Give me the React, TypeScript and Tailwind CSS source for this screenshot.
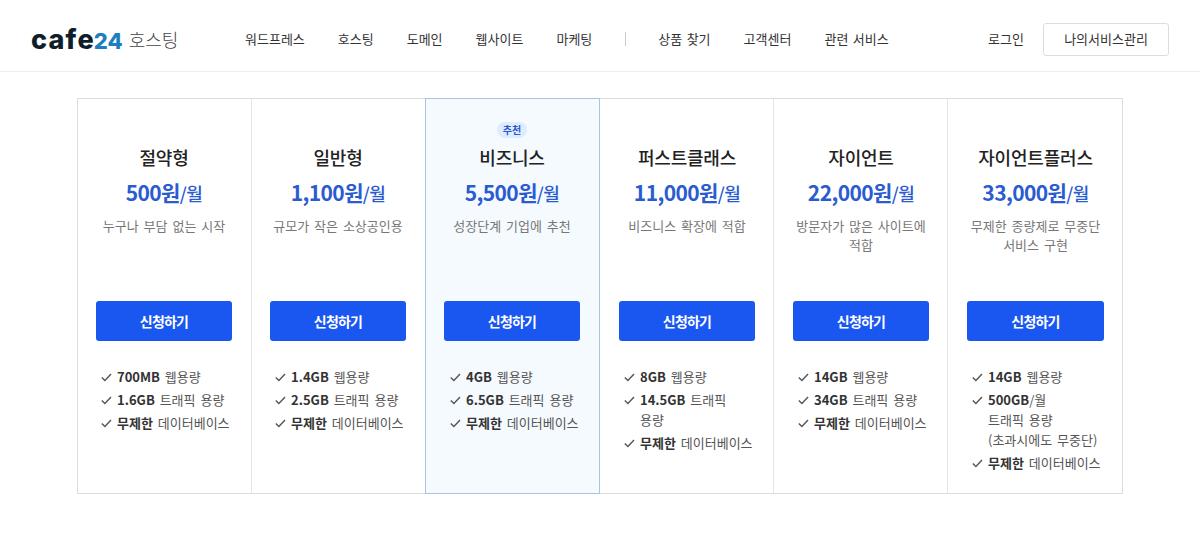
import React from "react";

type Plan = {
  name: string;
  price: string;
  desc: string[];
  features: { bold: string; rest: string[] }[];
  recommended?: boolean;
};

const plans: Plan[] = [
  {
    name: "절약형",
    price: "500원",
    desc: ["누구나 부담 없는 시작"],
    features: [
      { bold: "700MB", rest: [" 웹용량"] },
      { bold: "1.6GB", rest: [" 트래픽 용량"] },
      { bold: "무제한", rest: [" 데이터베이스"] },
    ],
  },
  {
    name: "일반형",
    price: "1,100원",
    desc: ["규모가 작은 소상공인용"],
    features: [
      { bold: "1.4GB", rest: [" 웹용량"] },
      { bold: "2.5GB", rest: [" 트래픽 용량"] },
      { bold: "무제한", rest: [" 데이터베이스"] },
    ],
  },
  {
    name: "비즈니스",
    price: "5,500원",
    desc: ["성장단계 기업에 추천"],
    recommended: true,
    features: [
      { bold: "4GB", rest: [" 웹용량"] },
      { bold: "6.5GB", rest: [" 트래픽 용량"] },
      { bold: "무제한", rest: [" 데이터베이스"] },
    ],
  },
  {
    name: "퍼스트클래스",
    price: "11,000원",
    desc: ["비즈니스 확장에 적합"],
    features: [
      { bold: "8GB", rest: [" 웹용량"] },
      { bold: "14.5GB", rest: [" 트래픽", "용량"] },
      { bold: "무제한", rest: [" 데이터베이스"] },
    ],
  },
  {
    name: "자이언트",
    price: "22,000원",
    desc: ["방문자가 많은 사이트에", "적합"],
    features: [
      { bold: "14GB", rest: [" 웹용량"] },
      { bold: "34GB", rest: [" 트래픽 용량"] },
      { bold: "무제한", rest: [" 데이터베이스"] },
    ],
  },
  {
    name: "자이언트플러스",
    price: "33,000원",
    desc: ["무제한 종량제로 무중단", "서비스 구현"],
    features: [
      { bold: "14GB", rest: [" 웹용량"] },
      { bold: "500GB", rest: ["/월", "트래픽 용량", "(초과시에도 무중단)"] },
      { bold: "무제한", rest: [" 데이터베이스"] },
    ],
  },
];

const navLeft = ["워드프레스", "호스팅", "도메인", "웹사이트", "마케팅"];
const navRight = ["상품 찾기", "고객센터", "관련 서비스"];

function Check() {
  return (
    <svg width="11" height="9" viewBox="0 0 11 9" fill="none" className="mt-[6px] shrink-0">
      <path d="M0.8 4.6 L3.9 7.6 L10 1" stroke="#555" strokeWidth="1.4" />
    </svg>
  );
}

function PlanColumn({ plan }: { plan: Plan }) {
  return (
    <div
      className={
        plan.recommended
          ? "bg-[#f5faff] border border-[#a9c3e2] -my-px -ml-px pl-[18px] pr-[19px] flex flex-col [&_ul]:ml-[6px]"
          : "border-r border-[#e4e4e4] last:border-r-0 pl-[18px] pr-[19px] [&:nth-child(n+4)]:pl-[19px] [&:nth-child(n+4)]:pr-[18px] flex flex-col"
      }
    >
      <div className="h-[22px] mt-[20px] flex items-center justify-center">
        {plan.recommended && (
          <span className="bg-[#deedfd] text-[#2b5bd0] text-[10px] font-bold leading-[16px] h-[16px] px-[6px] rounded-full">
            추천
          </span>
        )}
      </div>
      <div className="h-[160px] text-center">
        <div className="text-[18px] font-medium leading-[26px] tracking-[-0.2px] text-[#222] mt-[3px]">
          {plan.name}
        </div>
        <div className="text-[#2b5bd0] mt-[6px] leading-[32px] tracking-[-0.6px] whitespace-nowrap">
          <span className="text-[21px] font-bold">{plan.price}</span>
          <span className="text-[18px] font-medium">/월</span>
        </div>
        <div className="mt-[6px] text-[13px] leading-[19px] text-[#777] [word-spacing:2px]">
          {plan.desc.map((line) => (
            <div key={line}>{line}</div>
          ))}
        </div>
      </div>
      <button className="h-[40px] w-full rounded-[3px] bg-[#1a56f0] text-white text-[14px] font-bold tracking-[-0.8px]">
        신청하기
      </button>
      <ul className="mt-[26px] ml-[5px] flex flex-col gap-[3px] text-[13px] leading-[20px] text-[#555] [word-spacing:2px]">
        {plan.features.map((f) => (
          <li key={f.bold} className="flex gap-[5px]">
            <Check />
            <div>
              <strong className="font-bold text-[#333]">{f.bold}</strong>
              {f.rest.map((line, i) =>
                i === 0 ? (
                  <span key={line}>{line}</span>
                ) : (
                  <div key={line}>{line}</div>
                ),
              )}
            </div>
          </li>
        ))}
      </ul>
    </div>
  );
}

export default function App() {
  return (
    <div
      className="h-[536px] bg-white overflow-hidden"
      style={{ fontFamily: '"Noto Sans CJK KR", "Noto Sans", sans-serif' }}
    >
      <header className="h-[72px] border-b border-[#eee] pl-[31px] pr-[31px] pt-[7px] flex items-center">
        <div className="w-[214px] flex items-center">
          <span
            className="flex items-baseline font-bold leading-none text-[#0f1e2d]"
            style={{ fontFamily: "Inter, sans-serif" }}
          >
            <span className="text-[27px] font-extrabold tracking-[1.2px]">cafe</span>
            <span className="text-[22px] font-extrabold text-[#1c7fc0] -ml-[1px]">24</span>
          </span>
          <span className="ml-[6px] text-[18px] font-light text-[#444]">호스팅</span>
        </div>
        <nav className="flex items-center text-[13px] text-[#333] [word-spacing:1.5px]">
          <div className="flex gap-[33px]">
            {navLeft.map((n) => (
              <span key={n}>{n}</span>
            ))}
          </div>
          <div className="w-px h-[14px] bg-[#ccc] ml-[33px] mr-[32px]" />
          <div className="flex gap-[33px]">
            {navRight.map((n) => (
              <span key={n}>{n}</span>
            ))}
          </div>
        </nav>
        <div className="ml-auto flex items-center gap-[19px] text-[13px] text-[#333]">
          <span>로그인</span>
          <button className="w-[126px] h-[33px] border border-[#ddd] rounded-[3px] bg-white">
            나의서비스관리
          </button>
        </div>
      </header>
      <main className="ml-[77px] mt-[26px] w-[1046px] h-[396px] border border-[#ddd] grid grid-cols-6">
        {plans.map((p) => (
          <PlanColumn key={p.name} plan={p} />
        ))}
      </main>
    </div>
  );
}
